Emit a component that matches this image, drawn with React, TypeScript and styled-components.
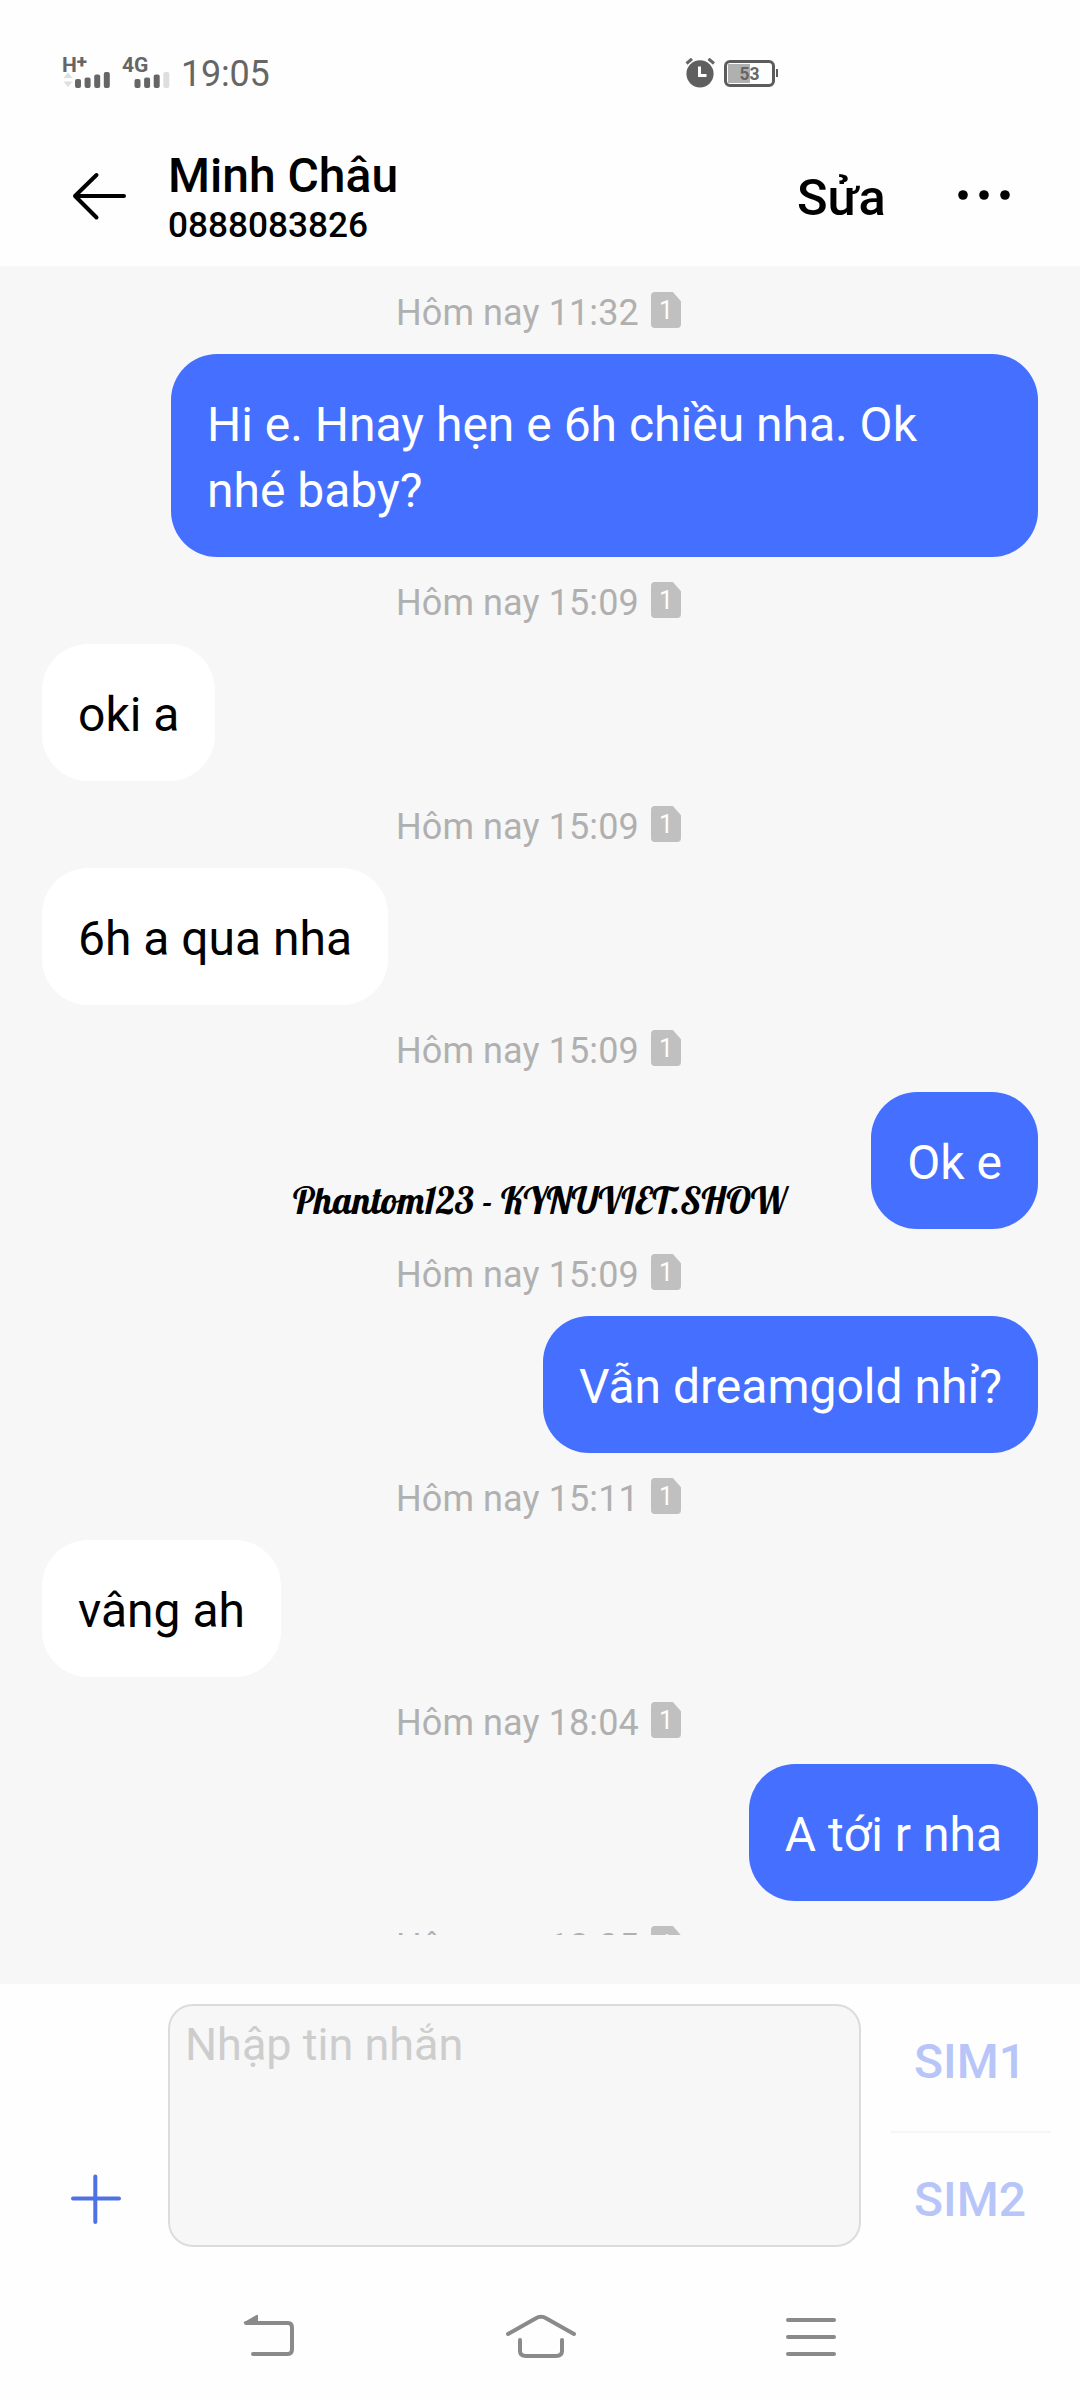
import React from "react";
import styled, { createGlobalStyle } from "styled-components";

const GlobalStyle = createGlobalStyle`
  * { box-sizing: border-box; }
  html, body { margin: 0; background: #fefefe; }
  body { font-family: Roboto, "Noto Sans", sans-serif; }
  button { border: 0; padding: 0; background: none; font: inherit; color: inherit; }
  svg { display: block; flex: none; }
`;

const Screen = styled.main`
  width: 1080px;
  height: 2400px;
  display: flex;
  flex-direction: column;
  overflow: hidden;
  background: #fefefe;
`;

const StatusBar = styled.div`
  height: 130px;
  flex: none;
  display: flex;
  align-items: flex-start;
  padding: 52px 0 0 62px;
  color: #666;
`;

const Network = styled.div<{ $width: number }>`
  width: ${(p) => p.$width}px;
  display: flex;
  flex-direction: column;
`;

const NetworkLabel = styled.span`
  height: 20px;
  display: flex;
  font-size: 21px;
  line-height: 26px;
  font-weight: 700;
  white-space: nowrap;
`;

const Plus = styled.span`
  font-size: 19px;
  line-height: 19px;
  font-weight: 900;
`;

const Clock = styled.time`
  width: 504px;
  padding-top: 1px;
  font-size: 36px;
  line-height: 42px;
  letter-spacing: -0.2px;
`;

const AlarmSlot = styled.div`
  padding-top: 6px;
`;

const Battery = styled.div`
  width: 51px;
  height: 27px;
  margin: 8px 0 0 9px;
  border: 3px solid #5c5c5c;
  border-radius: 6px;
  display: flex;
  align-items: center;
  justify-content: center;
  background: linear-gradient(#b0b0b0, #b0b0b0) 1px 1px / 22px 19px no-repeat;
  font-size: 17.5px;
  line-height: 20px;
  font-weight: 700;
`;

const BatteryTip = styled.span`
  width: 2px;
  height: 8px;
  margin: 17px 0 0 1px;
  background: #5c5c5c;
`;

const Header = styled.header`
  height: 136px;
  flex: none;
  display: flex;
  align-items: flex-start;
  padding-left: 70px;
  color: #000;
`;

const BackButton = styled.button`
  width: 98px;
  padding-top: 38px;
`;

const Contact = styled.div`
  width: 629px;
  padding-top: 18px;
  display: flex;
  flex-direction: column;
`;

const ContactName = styled.h1`
  margin: 0;
  font-size: 48px;
  line-height: 56px;
  font-weight: 500;
`;

const ContactPhone = styled.span`
  font-size: 35.2px;
  line-height: 42px;
  font-weight: 500;
`;

const EditButton = styled.button`
  width: 161px;
  padding-top: 38px;
  font-size: 50.5px;
  line-height: 60px;
  font-weight: 500;
  text-align: left;
`;

const MoreButton = styled.button`
  padding-top: 60px;
`;

const Chat = styled.section`
  position: relative;
  height: 1718px;
  flex: none;
  padding-bottom: 49px;
  background: #f7f7f7;
`;

const Messages = styled.div`
  height: 1669px;
  overflow: hidden;
  padding: 1px 42px 0;
  display: flex;
  flex-direction: column;
`;

const Stamp = styled.div`
  height: 87px;
  flex: none;
  display: flex;
  align-items: flex-start;
  padding: 25px 0 0 354px;
  color: #b0b0b0;
  font-size: 36px;
  line-height: 42px;
  letter-spacing: 0.1px;
`;

const StampText = styled.span`
  width: 255px;
  white-space: nowrap;
`;

const SimBadge = styled.span`
  width: 30px;
  height: 36px;
  border-radius: 4px;
  clip-path: polygon(0 0, 73% 0, 100% 26%, 100% 100%, 0 100%);
  background: #c0c0c0;
  color: #fff;
  font-size: 25px;
  line-height: 37px;
  text-align: center;
`;

const Bubble = styled.div<{ $sent: boolean }>`
  flex: none;
  max-width: 867px;
  align-self: ${(p) => (p.$sent ? "flex-end" : "flex-start")};
  padding: 38px 36px 33px;
  border-radius: 46px;
  background: ${(p) => (p.$sent ? "#456fff" : "#fff")};
  color: ${(p) => (p.$sent ? "#fff" : "#000")};
  font-size: 48px;
  line-height: 66px;
`;

const Watermark = styled.div`
  position: absolute;
  left: 293px;
  top: 908px;
  white-space: nowrap;
  color: #000;
  font: 37.3px/52px Lobster, "Liberation Serif", serif;
`;

const Composer = styled.footer`
  height: 286px;
  flex: none;
  display: flex;
  align-items: flex-start;
  padding-top: 20px;
`;

const AddButton = styled.button`
  width: 168px;
  padding: 169px 0 0 70px;
`;

const MessageBox = styled.div`
  width: 693px;
  height: 243px;
  padding: 11px 15px;
  border: 2px solid #dcdcdc;
  border-radius: 25px;
  background: #f7f7f7;
  color: #cdcdcd;
  font-size: 45px;
  line-height: 56px;
`;

const SimList = styled.div`
  width: 160px;
  margin-left: 30px;
  display: flex;
  flex-direction: column;
`;

const SimButton = styled.button`
  display: flex;
  align-items: flex-start;
  height: 127px;
  padding: 29px 0 0 23px;
  color: #b7c5f8;
  font-size: 48px;
  line-height: 58px;
  font-weight: 500;

  & + & {
    height: 138px;
    border-top: 2px solid #f6f6f6;
    padding-top: 38px;
  }
`;

const NavBar = styled.nav`
  height: 130px;
  display: flex;
  align-items: flex-start;
  justify-content: space-between;
  padding: 40px 242px 0;
`;

const SignalIcon = ({ start, bars }: { start: number; bars: string[] }) => (
  <svg width={start + 36} height="16" viewBox={`0 0 ${start + 36} 16`}>
    {start === 13 && <path d="M1.500 6 6 .500 10.500 6zM1.500 9.500h9L6 15z" fill="#dedede" />}
    {bars.map((fill, i) => {
      const h = [9, 10.5, 13.5, 16][i];
      return <rect key={i} x={start + i * 9.6} y={16 - h} width="6" height={h} rx="2" fill={fill} />;
    })}
  </svg>
);

const AlarmIcon = () => (
  <svg width="30" height="30" viewBox="0 0 30 30">
    <circle cx="15" cy="15.8" r="13.6" fill="#5f5f5f" />
    <path d="M14.500 8.500v9h7" fill="none" stroke="#fff" strokeWidth="3" />
    <path d="M1.500 5.500 7 .8M23.500.8 29 5.500" stroke="#666" strokeWidth="3" />
  </svg>
);

const ArrowIcon = () => (
  <svg width="58" height="56" viewBox="0 0 58 56" fill="none" stroke="#000" strokeWidth="4" strokeLinecap="round" strokeLinejoin="round">
    <path d="M54 28H5M26.500 7 5 28l21.500 21.500" />
  </svg>
);

const DotsIcon = () => (
  <svg width="56" height="10" viewBox="0 0 56 10">
    {[5, 26, 47].map((x) => (
      <circle key={x} cx={x} cy="5" r="4.8" />
    ))}
  </svg>
);

const PlusIcon = () => (
  <svg width="52" height="52" viewBox="0 0 52 52" stroke="#4f71e6" strokeWidth="4" strokeLinecap="round">
    <path d="M3 25.500H49M25.300 3.500V49" />
  </svg>
);

const navStroke = { fill: "none", stroke: "#8a8a8a", strokeWidth: 4, strokeLinecap: "round" as const };

const NavBackIcon = () => (
  <svg width="54" height="50" viewBox="0 0 54 50" {...navStroke}>
    <path d="M4 13H46Q50 13 50 18V39Q50 44 46 44H11" />
    <path d="M1.500 12.500 14.500 5Q16 4 16 6V13H2Z" fill="#8a8a8a" stroke="none" />
  </svg>
);

const NavHomeIcon = () => (
  <svg width="74" height="50" viewBox="0 0 74 50" {...navStroke}>
    <path d="M5 24 32.500 8.500Q38 5 43.500 8.500L71 24M17 30V41Q17 46 23 46H53Q59 46 59 41V30" />
  </svg>
);

const NavMenuIcon = () => (
  <svg width="54" height="50" viewBox="0 0 54 50" {...navStroke}>
    <path d="M4 10H50M4 27H50M4 44H50" />
  </svg>
);

const messages = [
  { time: "11:32", text: "Hi e. Hnay hẹn e 6h chiều nha. Ok nhé baby?", sent: true },
  { time: "15:09", text: "oki a", sent: false },
  { time: "15:09", text: "6h a qua nha", sent: false },
  { time: "15:09", text: "Ok e", sent: true },
  { time: "15:09", text: "Vẫn dreamgold nhỉ?", sent: true },
  { time: "15:11", text: "vâng ah", sent: false },
  { time: "18:04", text: "A tới r nha", sent: true },
  { time: "18:05", text: "", sent: false },
];

const dark = "#666";

export default function App() {
  return (
    <Screen>
      <GlobalStyle />
      <StatusBar>
        <Network $width={60}>
          <NetworkLabel>
            H<Plus>+</Plus>
          </NetworkLabel>
          <SignalIcon start={13} bars={[dark, dark, dark, dark]} />
        </Network>
        <Network $width={59}>
          <NetworkLabel>4G</NetworkLabel>
          <SignalIcon start={12.5} bars={[dark, dark, dark, "#dedede"]} />
        </Network>
        <Clock>19:05</Clock>
        <AlarmSlot>
          <AlarmIcon />
        </AlarmSlot>
        <Battery>53</Battery>
        <BatteryTip />
      </StatusBar>
      <Header>
        <BackButton aria-label="Back">
          <ArrowIcon />
        </BackButton>
        <Contact>
          <ContactName>Minh Châu</ContactName>
          <ContactPhone>0888083826</ContactPhone>
        </Contact>
        <EditButton>Sửa</EditButton>
        <MoreButton aria-label="More">
          <DotsIcon />
        </MoreButton>
      </Header>
      <Chat>
        <Messages>
          {messages.map((m, i) => (
            <React.Fragment key={i}>
              <Stamp>
                <StampText>Hôm nay {m.time}</StampText>
                <SimBadge>1</SimBadge>
              </Stamp>
              {m.text && <Bubble $sent={m.sent}>{m.text}</Bubble>}
            </React.Fragment>
          ))}
        </Messages>
        <Watermark>Phantom123 - KYNUVIET.SHOW</Watermark>
      </Chat>
      <Composer>
        <AddButton aria-label="Add">
          <PlusIcon />
        </AddButton>
        <MessageBox>Nhập tin nhắn</MessageBox>
        <SimList>
          <SimButton>SIM1</SimButton>
          <SimButton>SIM2</SimButton>
        </SimList>
      </Composer>
      <NavBar>
        <NavBackIcon />
        <NavHomeIcon />
        <NavMenuIcon />
      </NavBar>
    </Screen>
  );
}
